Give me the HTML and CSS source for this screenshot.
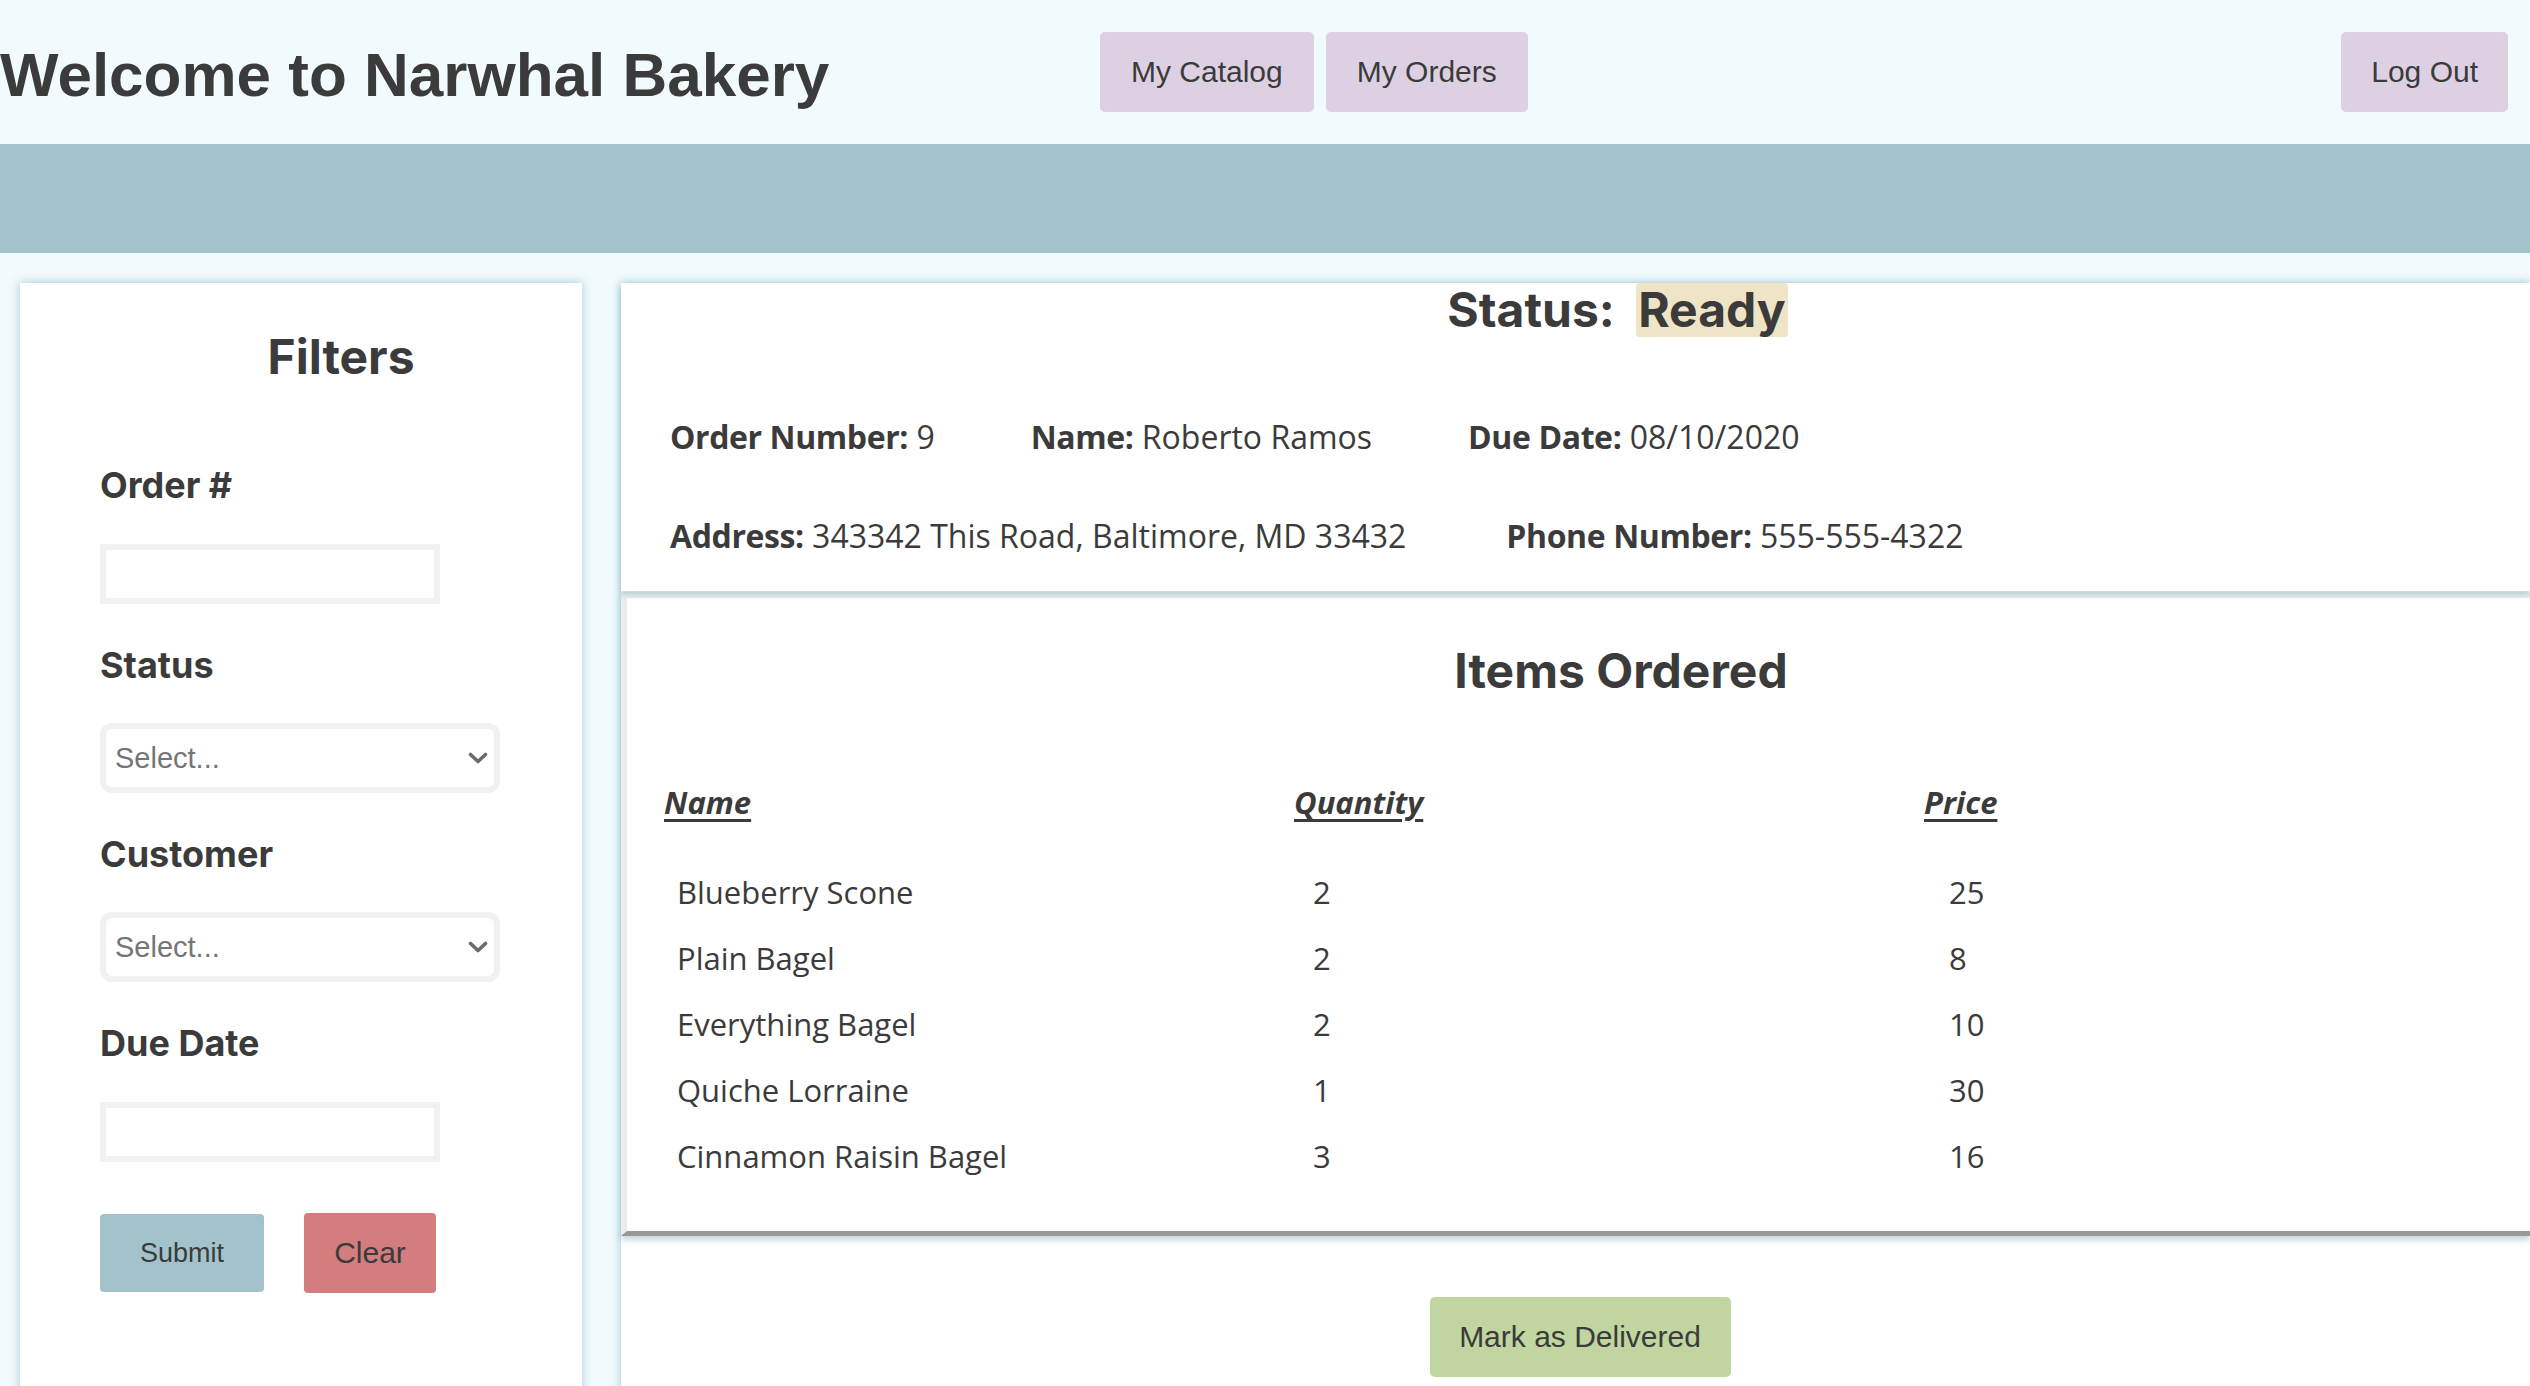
FILE: index.html
```html
<!DOCTYPE html>
<html lang="en">
<head>
<meta charset="utf-8">
<title>Narwhal Bakery</title>
<link rel="stylesheet" href="styles.css">
</head>
<body>
<header class="topbar">
  <h1 class="brand">Welcome to Narwhal Bakery</h1>
  <nav class="nav">
    <button class="nav-btn">My Catalog</button>
    <button class="nav-btn">My Orders</button>
  </nav>
  <button class="nav-btn logout">Log Out</button>
</header>
<div class="band"></div>
<div class="content">
  <aside class="filters">
    <h2 class="filters-title">Filters</h2>
    <label class="f-label">Order #</label>
    <input class="f-input" type="text">
    <label class="f-label">Status</label>
    <div class="f-select-wrap">
      <select class="f-select"><option>Select...</option></select>
      <svg class="chev" width="20" height="12" viewBox="0 0 20 12"><polyline points="2.5,2.5 10,9.5 17.5,2.5" fill="none" stroke="#6b6b6b" stroke-width="3.6" stroke-linecap="round" stroke-linejoin="round"/></svg>
    </div>
    <label class="f-label">Customer</label>
    <div class="f-select-wrap">
      <select class="f-select"><option>Select...</option></select>
      <svg class="chev" width="20" height="12" viewBox="0 0 20 12"><polyline points="2.5,2.5 10,9.5 17.5,2.5" fill="none" stroke="#6b6b6b" stroke-width="3.6" stroke-linecap="round" stroke-linejoin="round"/></svg>
    </div>
    <label class="f-label">Due Date</label>
    <input class="f-input" type="text">
    <div class="f-actions">
      <button class="btn-submit">Submit</button>
      <button class="btn-clear">Clear</button>
    </div>
  </aside>
  <main class="order">
    <section class="summary">
      <h2 class="status-title">Status: <span class="status-badge">Ready</span></h2>
      <div class="info-row first">
        <span class="info"><b>Order Number:</b> 9</span>
        <span class="info"><b>Name:</b> Roberto Ramos</span>
        <span class="info"><b>Due Date:</b> 08/10/2020</span>
      </div>
      <div class="info-row second">
        <span class="info"><b>Address:</b> 343342 This Road, Baltimore, MD 33432</span>
        <span class="info"><b>Phone Number:</b> 555-555-4322</span>
      </div>
    </section>
    <section class="items">
      <h2 class="items-title">Items Ordered</h2>
      <table class="items-table">
        <colgroup><col class="c"><col class="c"><col class="c"></colgroup>
        <thead>
          <tr><th>Name</th><th>Quantity</th><th>Price</th></tr>
        </thead>
        <tbody>
          <tr><td class="n">Blueberry Scone</td><td class="q">2</td><td class="p">25</td></tr>
          <tr><td class="n">Plain Bagel</td><td class="q">2</td><td class="p">8</td></tr>
          <tr><td class="n">Everything Bagel</td><td class="q">2</td><td class="p">10</td></tr>
          <tr><td class="n">Quiche Lorraine</td><td class="q">1</td><td class="p">30</td></tr>
          <tr><td class="n">Cinnamon Raisin Bagel</td><td class="q">3</td><td class="p">16</td></tr>
        </tbody>
      </table>
    </section>
    <div class="actions">
      <button class="btn-deliver">Mark as Delivered</button>
    </div>
  </main>
</div>
</body>
</html>
```
FILE: styles.css
```css
html, body {
  margin: 0;
  padding: 0;
  overflow: hidden;
}
body {
  background: #f1fafd;
  color: #3b3b3b;
  font-family: "Liberation Sans", Arial, sans-serif;
}
button {
  font-family: "Liberation Sans", Arial, sans-serif;
  color: #3b3b3b;
  border: none;
  cursor: pointer;
}

/* header */
.topbar {
  height: 144px;
  display: flex;
  align-items: center;
  gap: 12px;
  padding-right: 22px;
}
.brand {
  margin: 0;
  width: 1088px;
  padding-top: 5px;
  font-family: "Liberation Sans", Arial, sans-serif;
  font-weight: 700;
  font-size: 62px;
  letter-spacing: 0;
  color: #3b3b3b;
}
.nav {
  display: flex;
  gap: 12px;
}
.nav-btn {
  height: 80px;
  padding: 0 31px;
  background: #ddd0e2;
  border-radius: 5px;
  font-size: 30px;
}
.logout {
  margin-left: auto;
  padding: 0 30px;
}
.band {
  height: 109px;
  background: #a2c3cc;
}

/* content */
.content {
  display: flex;
  align-items: stretch;
  gap: 39px;
  padding: 30px 0 0 20px;
  min-height: 1200px;
}
.filters {
  flex: 0 0 562px;
  background: #fff;
  box-shadow: 0 0 9px rgba(100, 160, 180, 0.55);
  padding: 45px 0 0 80px;
  box-sizing: border-box;
  display: flex;
  flex-direction: column;
  align-items: flex-start;
}
.filters-title {
  align-self: stretch;
  text-align: center;
  margin: 0;
  font-family: Inter, "Liberation Sans", sans-serif;
  font-weight: 700;
  font-size: 48px;
  line-height: 58px;
}
.f-label {
  display: block;
  margin-top: 39px;
  font-family: Inter, "Liberation Sans", sans-serif;
  font-weight: 700;
  font-size: 36px;
  line-height: 44px;
}
.filters-title + .f-label {
  margin-top: 77px;
}
.f-input {
  margin-top: 37px;
  width: 340px;
  height: 60px;
  box-sizing: border-box;
  border: 6px solid #f0f1f3;
  border-radius: 0;
  background: #fff;
  outline: none;
}
.f-select-wrap {
  position: relative;
  margin-top: 36px;
  width: 400px;
  height: 70px;
}
.f-select {
  appearance: none;
  -webkit-appearance: none;
  width: 100%;
  height: 100%;
  box-sizing: border-box;
  border: 6px solid #f0f1f3;
  border-radius: 12px;
  background: #fff;
  padding: 0 0 0 9px;
  font-family: "Liberation Sans", Arial, sans-serif;
  font-size: 29px;
  color: #757575;
  outline: none;
}
.chev {
  position: absolute;
  right: 12px;
  top: 29px;
  pointer-events: none;
}
.f-actions {
  display: flex;
  align-items: center;
  gap: 40px;
  margin-top: 51px;
}
.btn-submit {
  height: 78px;
  width: 164px;
  background: #a2c3cc;
  border-radius: 4px;
  font-size: 27px;
}
.btn-clear {
  height: 80px;
  width: 132px;
  background: #d37d7e;
  border-radius: 4px;
  font-size: 30px;
}

/* order */
.order {
  flex: 1;
  background: #fff;
  box-shadow: 0 0 9px rgba(100, 160, 180, 0.55);
  display: flex;
  flex-direction: column;
  min-width: 0;
}
.summary {
  position: relative;
  z-index: 1;
  padding: 0 0 35px 49px;
  box-shadow: 0 3px 6px rgba(100, 160, 180, 0.45);
  background: #fff;
}
.status-title {
  margin: 0;
  padding-left: 35px;
  text-align: center;
  font-family: Inter, "Liberation Sans", sans-serif;
  font-weight: 700;
  font-size: 48px;
  line-height: 54px;
}
.status-badge {
  display: inline-block;
  margin-left: 10px;
  padding: 0 2px;
  background: #efe5c6;
  border-radius: 3px;
}
.info-row {
  margin-top: 80px;
  display: flex;
  gap: 100px;
  font-family: "Open Sans", Lato, sans-serif;
  font-size: 32px;
  line-height: 40px;
}
.info-row.first {
  gap: 96px;
}
.info-row.second {
  margin-top: 59px;
}
.info b {
  font-weight: 700;
  letter-spacing: -0.4px;
}
.items {
  margin-top: 1px;
  border-style: solid;
  border-width: 6px 0 5px 6px;
  border-color: #ececec #999 #999 #ececec;
  padding: 44px 0 42px 37px;
  box-shadow: 0 4px 6px rgba(100, 160, 180, 0.4);
  background: #fff;
}
.items-title {
  margin: 0;
  padding-left: 48px;
  text-align: center;
  font-family: Inter, "Liberation Sans", sans-serif;
  font-weight: 700;
  font-size: 48px;
  line-height: 58px;
}
.items-table {
  margin-top: 80px;
  width: 1890px;
  border-collapse: collapse;
  table-layout: fixed;
  font-family: "Open Sans", Lato, sans-serif;
  font-size: 31px;
}
.items-table col.c {
  width: 630px;
}
.items-table th {
  text-align: left;
  padding: 0 0 35px 0;
  line-height: 44px;
  font-weight: 700;
  font-style: italic;
  text-decoration: underline;
  text-underline-offset: 5px;
}
.items-table td {
  padding: 0;
  line-height: 66px;
}
.items-table td.n { padding-left: 13px; }
.items-table td.q { padding-left: 19px; }
.items-table td.p { padding-left: 25px; }
.actions {
  display: flex;
  justify-content: center;
  padding: 61px 0 40px 9px;
}
.btn-deliver {
  height: 80px;
  width: 301px;
  background: #c0d59f;
  border-radius: 5px;
  font-size: 30px;
}
```
